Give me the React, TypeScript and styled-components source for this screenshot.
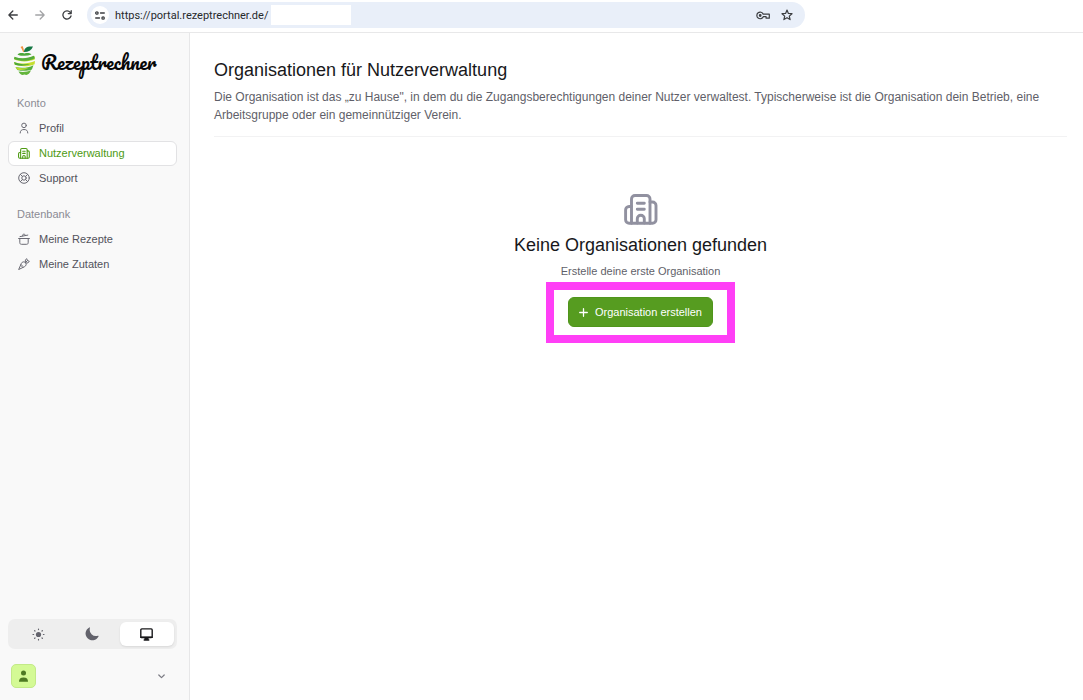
import React from 'react';
import styled, { createGlobalStyle, css } from 'styled-components';

const Global = createGlobalStyle`
  *, *::before, *::after { box-sizing: border-box; }
  body { margin: 0; background: #fff; color: #18181b; font-family: "Liberation Sans", Arial, sans-serif; }
  h1, h2, p, ul { margin: 0; padding: 0; font-weight: 400; }
  ul { list-style: none; }
  button { font: inherit; color: inherit; border: 0; padding: 0; background: none; cursor: pointer; }
  svg { display: block; flex: none; }
`;

const Page = styled.div`
  display: flex;
  flex-direction: column;
  min-height: 100vh;
`;

const BrowserBar = styled.header`
  display: flex;
  align-items: center;
  height: 33px;
  padding: 0 0 2px 6px;
  gap: 13px;
  border-bottom: 1px solid #e8e8e9;
`;

const BarButton = styled.button<{ $muted?: boolean }>`
  display: grid;
  place-items: center;
  width: 14px;
  height: 14px;
  color: ${p => (p.$muted ? '#a3a4a6' : '#3c3e41')};
`;

const AddressBar = styled.div`
  display: flex;
  align-items: center;
  width: 67%;
  max-width: 718px;
  height: 26px;
  padding: 0 11px 0 4px;
  border-radius: 13px;
  background: #e9eff9;
`;

const SiteInfo = styled.button`
  display: grid;
  place-items: center;
  width: 18px;
  height: 18px;
  margin-right: 6px;
  border-radius: 50%;
  background: #fff;
  color: #3c3e41;
`;

const Url = styled.input`
  width: 156px;
  height: 20px;
  border: 0;
  padding: 0;
  background: transparent;
  color: #27292c;
  font: 11px Roboto, sans-serif;
  outline: none;
`;

const Redaction = styled.span`
  width: 80px;
  height: 20px;
  background: #fff;
`;

const BarActions = styled.div`
  display: flex;
  gap: 10px;
  margin-left: auto;
`;

const Body = styled.div`
  display: flex;
  flex: 1;
`;

const Sidebar = styled.aside`
  display: flex;
  flex-direction: column;
  width: 190px;
  flex: none;
  padding: 12px 12px 12px 8px;
  border-right: 1px solid #e7e7e8;
  background: #f9f9f9;
`;

const Brand = styled.a`
  display: flex;
  gap: 5px;
  height: 35px;
  padding-left: 5px;
  color: #080808;
  text-decoration: none;
`;

const Wordmark = styled.span`
  font: 400 19px/35px Pacifico, cursive;
`;

const NavGroup = styled.section`
  margin-top: 17px;
`;

const GroupTitle = styled.h2`
  padding: 0 9px;
  margin-bottom: 6px;
  font-size: 11px;
  line-height: 13px;
  color: #8b8b94;
`;

const NavLink = styled.a<{ $active?: boolean }>`
  display: flex;
  align-items: center;
  gap: 9px;
  height: 25px;
  padding: 0 9px 1px;
  border: 1px solid transparent;
  border-radius: 6px;
  font-size: 11px;
  line-height: 13px;
  color: #52525b;
  text-decoration: none;
  svg { color: #6b6b74; }
  ${p => p.$active && css`
    border-color: #e2e2e4;
    background: #fff;
    color: #4d9a12;
    svg { color: #4d9a12; }
  `}
`;

const ThemeSwitch = styled.div`
  display: grid;
  grid-template-columns: repeat(3, 1fr);
  height: 30px;
  margin-top: auto;
  padding: 3px;
  border-radius: 7px;
  background: #eeeeee;
`;

const ThemeButton = styled.button<{ $active?: boolean }>`
  display: grid;
  place-items: center;
  border-radius: 6px;
  color: #62626b;
  ${p => p.$active && css`
    background: #fff;
    color: #18181b;
    box-shadow: 0 1px 2px #00000018;
  `}
`;

const Account = styled.button`
  display: flex;
  align-items: center;
  justify-content: space-between;
  margin-top: 15px;
  padding: 0 12px 0 3px;
  color: #7b7b84;
`;

const Avatar = styled.span`
  display: grid;
  place-items: center;
  width: 25px;
  height: 24px;
  border: 1px solid #c3ea88;
  border-radius: 5px;
  background: #d4fa95;
  color: #4d7a22;
`;

const Main = styled.main`
  flex: 1;
  min-width: 0;
  padding: 25px 16px 24px 24px;
`;

const Intro = styled.header`
  padding-bottom: 12px;
  border-bottom: 1px solid #f2f2f3;
`;

const Title = styled.h1`
  font-size: 18px;
  line-height: 24px;
`;

const Lead = styled.p`
  margin-top: 6px;
  font-size: 12px;
  line-height: 18px;
  color: #5f5f69;
`;

const Empty = styled.section`
  display: flex;
  flex-direction: column;
  align-items: center;
  padding-top: 57px;
  color: #9191a0;
`;

const EmptyTitle = styled.h2`
  margin-top: 8px;
  font-size: 18px;
  line-height: 24px;
  color: #18181b;
`;

const EmptyText = styled.p`
  margin-top: 7px;
  font-size: 11px;
  line-height: 14px;
  color: #5f5f69;
`;

const Highlight = styled.div`
  margin-top: 4px;
  padding: 7px 14px 8px;
  border: 8px solid #ff3ff6;
`;

const CreateButton = styled.button`
  display: flex;
  align-items: center;
  gap: 7px;
  height: 30px;
  padding: 0 10px;
  border: 1px solid #4f951b;
  border-radius: 6px;
  background: #569c20;
  color: #fff;
  font-size: 11px;
`;

const strokeProps = {
  fill: 'none',
  stroke: 'currentColor',
  strokeLinecap: 'round' as const,
  strokeLinejoin: 'round' as const,
  'aria-hidden': true,
};

const BuildingIcon = ({ width, height, stroke }: { width: number; height: number; stroke: number }) => (
  <svg width={width} height={height} viewBox="0 0 34 31" {...strokeProps} strokeWidth={stroke}>
    <path d="M7.5 29.2V5A3.5 3.5 0 0 1 11 1.5h11.5A3.5 3.5 0 0 1 26 5v24.2" />
    <path d="M7.5 12.5H5A3.5 3.5 0 0 0 1.6 16v9.7a3.5 3.5 0 0 0 3.5 3.5h23.4a3.5 3.5 0 0 0 3.5-3.5V11.5A3.5 3.5 0 0 0 28.5 8H26" />
    <path d="M13.3 9.3h7M13.3 15.2h7M13.3 29v-4.3a3.5 3.5 0 0 1 7 0V29" />
  </svg>
);

const PersonIcon = () => (
  <svg width="12" height="12" viewBox="0 0 12 12" {...strokeProps}>
    <circle cx="6" cy="3.4" r="2.3" />
    <path d="M2.2 11c0-2.4 1.4-3.5 3.8-3.5s3.8 1.1 3.8 3.5" />
  </svg>
);

const SupportIcon = () => (
  <svg width="12" height="12" viewBox="0 0 12 12" {...strokeProps}>
    <circle cx="6" cy="6" r="5.3" />
    <circle cx="6" cy="6" r="2.2" />
    <path d="m2.3 2.3 2.1 2.1M9.7 2.3 7.6 4.4M2.3 9.7l2.1-2.1M9.7 9.7 7.6 7.6" />
  </svg>
);

const PotIcon = () => (
  <svg width="12" height="12" viewBox="0 0 12 12" {...strokeProps}>
    <path d="M.6 5.5h10.8M1.8 5.5v4.2c0 1 .6 1.6 1.6 1.6h5.2c1 0 1.6-.6 1.6-1.6V5.5M2 3.6l7.8-1.5M4.6 2.9c-.2-1.1.1-1.5 1-1.7s1.4.1 1.6.9" />
  </svg>
);

const CarrotIcon = () => (
  <svg width="12" height="12" viewBox="0 0 12 12" {...strokeProps}>
    <path d="M.8 11.2 3.4 5.3C4.2 3.7 6 3.3 7.4 4.6s.9 3.2-.7 4zM3 6.5l1.6 1.6M4.8 9.4l-1-1M7.4 4.6V1.8L8.8.7l.6 1.9 1.9.6-1.1 1.4zL9.4 2.6" />
  </svg>
);

const LogoMark = () => (
  <svg width="23" height="31" viewBox="0 0 23 33" preserveAspectRatio="none" aria-hidden="true">
    <path d="M10 7.5C9.5 5 8.5 3.5 7.5 2l2-1c1 2 1.5 4 1.5 6.500z" fill="#ee9141" />
    <path d="M11 7.5C11 3 14 1 20 1.6 18.5 5.5 15.5 7.5 11 7.5z" fill="#147743" />
    <path d="M4.5 10.3C6.5 8 9 8.500 11.500 9c2.500-.7 5-.8 7 1.200C14 12 9 12 4.500 10.300z" fill="#4ca83a" />
    <path d="M1.5 13c6 2.5 13 2 19.500-1.500.9 1.600 1 2.500.9 3.700-6.500 3-14.500 3-20.900 0z" fill="#b7d92d" />
    <path d="M1.5 12.5C8 15 14.5 14.5 21 11.5l.7 2.500C15 17.500 7.500 17.500 1 14.800z" fill="#55ab3b" />
    <path d="M1 18c7 2.500 14 2 21-1l-.4 3.500c-6.500 3-14 2.500-20 .6z" fill="#c5de2e" />
    <path d="M1 18c5 2.200 10 2.800 16 2.300-5 2.200-10 2.200-15 .8z" fill="#4ca83a" />
    <path d="M2.500 23.500c6 1.500 12.500 1 18-2l-1.600 4.500c-5 2-10 1.800-14.600.5z" fill="#58b03d" />
    <path d="M2.500 23.500c5 1.500 9 1.700 13 .8-3 2.200-7 2.800-11.200 2z" fill="#bddb2e" />
    <path d="M5.500 28.300c4.500 1 8.500.5 12.500-1.300-1.500 4.500-4 5.700-6.500 4.500-2.500 1-4.500 0-6-3.200z" fill="#63b53c" />
  </svg>
);

export default function App() {
  return (
    <>
      <Global />
      <Page>
        <BrowserBar>
          <BarButton aria-label="Zurück">
            <svg width="10" height="10" viewBox="0 0 10 10" {...strokeProps} strokeWidth="1.3"><path d="M9.3 5H1M4.8 1 .9 5l3.9 4" /></svg>
          </BarButton>
          <BarButton $muted aria-label="Vorwärts">
            <svg width="10" height="10" viewBox="0 0 10 10" {...strokeProps} strokeWidth="1.3"><path d="M.7 5H9M5.2 1 9.1 5 5.2 9" /></svg>
          </BarButton>
          <BarButton aria-label="Neu laden">
            <svg width="10" height="10" viewBox="0 0 10 10" {...strokeProps} strokeWidth="1.3"><path d="M9 6A4.1 4.1 0 1 1 8.2 2.3L9 3.3M9.2.7v2.9H6.3" /></svg>
          </BarButton>
          <AddressBar>
            <SiteInfo aria-label="Website-Informationen">
              <svg width="10" height="9" viewBox="0 0 10 9" {...strokeProps} strokeWidth="1.3"><circle cx="1.9" cy="2" r="1.2" /><path d="M5.5 2h3.8M.7 7h3.8" /><circle cx="8.1" cy="7" r="1.2" /></svg>
            </SiteInfo>
            <Url aria-label="Adresse" defaultValue="https://portal.rezeptrechner.de/" />
            <Redaction />
            <BarActions>
              <BarButton aria-label="Passwörter">
                <svg width="14" height="9" viewBox="0 0 14 9" {...strokeProps} strokeWidth="1.2"><path d="M7.2 3.2h6.1v4h-3.2V5.7H7.2a3.3 3.3 0 1 1 0-2.5z" /><circle cx="4.2" cy="4.5" r=".8" fill="currentColor" /></svg>
              </BarButton>
              <BarButton aria-label="Lesezeichen">
                <svg width="12" height="12" viewBox="0 0 12 12" {...strokeProps} strokeWidth="1.2"><path d="m6 1.1 1.4 3.3 3.6.3-2.7 2.4.8 3.5L6 8.7l-3.1 1.9.8-3.5L1 4.7l3.6-.3z" /></svg>
              </BarButton>
            </BarActions>
          </AddressBar>
        </BrowserBar>
        <Body>
          <Sidebar>
            <Brand href="#" aria-label="Rezeptrechner">
              <LogoMark />
              <Wordmark>Rezeptrechner</Wordmark>
            </Brand>
            <nav>
              <NavGroup>
                <GroupTitle>Konto</GroupTitle>
                <ul>
                  <li><NavLink href="#profil"><PersonIcon />Profil</NavLink></li>
                  <li><NavLink href="#nutzer" $active aria-current="page"><BuildingIcon width={12} height={11} stroke={3} />Nutzerverwaltung</NavLink></li>
                  <li><NavLink href="#support"><SupportIcon />Support</NavLink></li>
                </ul>
              </NavGroup>
              <NavGroup>
                <GroupTitle>Datenbank</GroupTitle>
                <ul>
                  <li><NavLink href="#rezepte"><PotIcon />Meine Rezepte</NavLink></li>
                  <li><NavLink href="#zutaten"><CarrotIcon />Meine Zutaten</NavLink></li>
                </ul>
              </NavGroup>
            </nav>
            <ThemeSwitch role="group" aria-label="Farbschema">
              <ThemeButton aria-label="Hell">
                <svg width="13" height="13" viewBox="0 0 13 13" {...strokeProps} strokeWidth="1.2"><circle cx="6.5" cy="6.5" r="2.6" fill="currentColor" stroke="none" /><path d="M6.5 1v.6M6.5 11.400v.6M1 6.5h.6M11.400 6.5h.6M2.600 2.600l.4.4M10 10l.4.4M2.600 10.400l.4-.4M10 3l.4-.4" /></svg>
              </ThemeButton>
              <ThemeButton aria-label="Dunkel">
                <svg width="14" height="14" viewBox="0 0 14 14" fill="currentColor" aria-hidden="true"><path d="M5 .8a.5.5 0 0 0-.7-.4 6.8 6.8 0 1 0 9.2 9 .5.5 0 0 0-.6-.7A6.3 6.3 0 0 1 5 .8z" /></svg>
              </ThemeButton>
              <ThemeButton $active aria-label="System" aria-pressed="true">
                <svg width="13" height="13" viewBox="0 0 13 13" {...strokeProps} strokeWidth="1.4"><rect x=".8" y=".9" width="11.4" height="8.6" rx="1" /><path d="M.8 9.2h11.4M5.2 9.8v1.5M7.8 9.8v1.5M4.3 12h4.4M6.5 9.8V12" strokeWidth="1.6" /></svg>
              </ThemeButton>
            </ThemeSwitch>
            <Account aria-label="Benutzerkonto">
              <Avatar>
                <svg width="11" height="12" viewBox="0 0 11 12" fill="currentColor" aria-hidden="true"><circle cx="5.5" cy="2.9" r="2.5" /><path d="M1 11.7c-.1-2.6 1.4-4.2 4.5-4.2s4.6 1.6 4.5 4.2z" /></svg>
              </Avatar>
              <svg width="7" height="5" viewBox="0 0 7 5" {...strokeProps} strokeWidth="1.2"><path d="m.8 1 2.7 2.7L6.2 1" /></svg>
            </Account>
          </Sidebar>
          <Main>
            <Intro>
              <Title>Organisationen für Nutzerverwaltung</Title>
              <Lead>Die Organisation ist das „zu Hause", in dem du die Zugangsberechtigungen deiner Nutzer verwaltest. Typischerweise ist die Organisation dein Betrieb, eine Arbeitsgruppe oder ein gemeinnütziger Verein.</Lead>
            </Intro>
            <Empty>
              <BuildingIcon width={34} height={31} stroke={2.9} />
              <EmptyTitle>Keine Organisationen gefunden</EmptyTitle>
              <EmptyText>Erstelle deine erste Organisation</EmptyText>
              <Highlight>
                <CreateButton>
                  <svg width="9" height="9" viewBox="0 0 9 9" {...strokeProps} strokeWidth="1.3"><path d="M4.5.7v7.6M.7 4.5h7.6" /></svg>
                  Organisation erstellen
                </CreateButton>
              </Highlight>
            </Empty>
          </Main>
        </Body>
      </Page>
    </>
  );
}
